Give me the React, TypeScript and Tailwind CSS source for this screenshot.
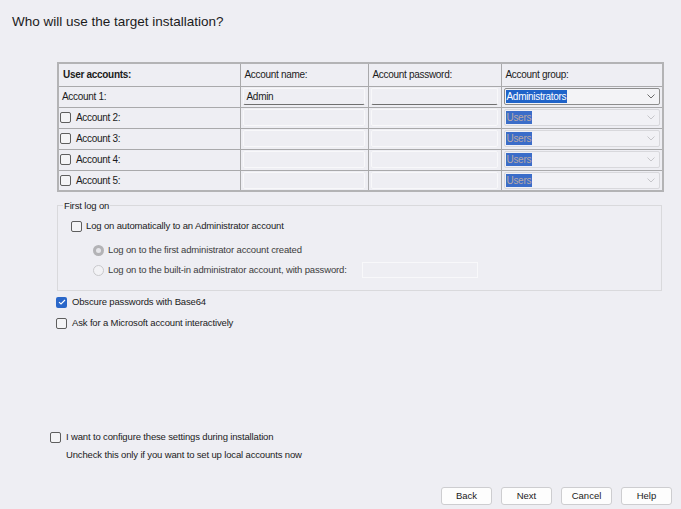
import React from "react";

const bg = "bg-[#eeeef3]";

function CheckBox({ checked }: { checked?: boolean }) {
  if (checked) {
    return (
      <span className="flex h-[11px] w-[11px] shrink-0 items-center justify-center rounded-[2px] bg-[#2a67c9]">
        <svg width="8" height="6" viewBox="0 0 8 6">
          <path d="M1 3.2 L3 5 L7 1" fill="none" stroke="white" strokeWidth="1.1" />
        </svg>
      </span>
    );
  }
  return <span className="h-[11px] w-[11px] shrink-0 rounded-[2px] border border-[#5e5e5e] bg-[#f4f4f6]" />;
}

function Radio({ checked }: { checked?: boolean }) {
  if (checked) {
    return (
      <span className="flex h-[11px] w-[11px] shrink-0 items-center justify-center rounded-full bg-[#b3b3b6]">
        <span className="h-[5px] w-[5px] rounded-full bg-[#e6e6ea]" />
      </span>
    );
  }
  return <span className="h-[11px] w-[11px] shrink-0 rounded-full border border-[#c9c9cc] bg-[#f2f2f5]" />;
}

function TextBox({ value, active }: { value?: string; active?: boolean }) {
  return (
    <div
      className={`flex h-[17px] items-center rounded-[2px] border px-[3px] ${
        active ? "border-[#f8f8fa] border-b-[#6f6f6f]" : "border-[#f8f8fa]"
      }`}
    >
      {value}
    </div>
  );
}

function Chevron({ color }: { color: string }) {
  return (
    <svg width="8" height="5" viewBox="0 0 8 5">
      <path d="M0.5 0.5 L4 4 L7.5 0.5" fill="none" stroke={color} strokeWidth="1" />
    </svg>
  );
}

function GroupSelect({ value, enabled }: { value: string; enabled?: boolean }) {
  return (
    <div
      className={`flex h-[17px] items-center rounded-[2px] border pl-[1px] pr-[4px] ${
        enabled ? "border-[#8d8d8d] bg-[#f3f3f6]" : "border-[#d8d8dc] bg-[#f1f1f5]"
      }`}
    >
      <span
        className={`px-[1px] leading-[13px] ${
          enabled ? "bg-[#1f63c9] text-white" : "bg-[#3b6dc9] text-[#b9a8a6]"
        }`}
      >
        {value}
      </span>
      <span className="flex-1" />
      <Chevron color={enabled ? "#6a6a6a" : "#c6c6ca"} />
    </div>
  );
}

const cell = "border border-[#a9a9ab] p-0 align-middle";
const small = "text-[9.5px] tracking-[-0.15px]";

export default function App() {
  const rows = [2, 3, 4, 5];

  return (
    <div
      className={`flex h-[509px] w-[681px] flex-col overflow-hidden ${bg} font-['Liberation_Sans',Arial,sans-serif] text-[#1b1b1b]`}
    >
      {/* Title */}
      <div className="h-[44px] pl-[12px] pt-[12px] text-[13.5px] leading-[20px]">
        Who will use the target installation?
      </div>

      {/* Accounts table */}
      <table className="ml-[57px] mt-[18px] w-[605px] table-fixed border-collapse border-2 border-[#b3b3b5] text-[10px] tracking-[-0.3px]">
        <colgroup>
          <col className="w-[182px]" />
          <col className="w-[128px]" />
          <col className="w-[133px]" />
          <col className="w-[162px]" />
        </colgroup>
        <tbody>
          <tr className="h-[23px]">
            <td className={`${cell} pl-[4px] font-bold`}>User accounts:</td>
            <td className={`${cell} pl-[4px]`}>Account name:</td>
            <td className={`${cell} pl-[4px]`}>Account password:</td>
            <td className={`${cell} pl-[4px]`}>Account group:</td>
          </tr>
          <tr className="h-[21px]">
            <td className={`${cell} pl-[3px]`}>Account 1:</td>
            <td className={`${cell} pl-[2px] pr-[3px]`}>
              <TextBox value="Admin" active />
            </td>
            <td className={`${cell} pl-[2px] pr-[3px]`}>
              <TextBox active />
            </td>
            <td className={`${cell} px-[2px]`}>
              <GroupSelect value="Administrators" enabled />
            </td>
          </tr>
          {rows.map((n) => (
            <tr key={n} className="h-[21px]">
              <td className={`${cell} pl-[1px]`}>
                <div className="flex items-center gap-[5px]">
                  <CheckBox />
                  <span>Account {n}:</span>
                </div>
              </td>
              <td className={`${cell} pl-[2px] pr-[3px]`}>
                <TextBox />
              </td>
              <td className={`${cell} pl-[2px] pr-[3px]`}>
                <TextBox />
              </td>
              <td className={`${cell} px-[2px]`}>
                <GroupSelect value="Users" />
              </td>
            </tr>
          ))}
        </tbody>
      </table>

      {/* First log on group */}
      <div className={`relative ml-[57px] mt-[13px] h-[86px] w-[605px] border border-[#d9d9dc] ${small}`}>
        <span className={`absolute left-[5px] top-[-7px] ${bg} px-[1px] leading-[13px]`}>First log on</span>
        <div className="mt-[13px] flex h-[14px] items-center gap-[4px] pl-[13px]">
          <CheckBox />
          <span>Log on automatically to an Administrator account</span>
        </div>
        <div className="mt-[10px] flex h-[14px] items-center gap-[4px] pl-[35px] text-[#3c3c3c]">
          <Radio checked />
          <span>Log on to the first administrator account created</span>
        </div>
        <div className="mt-[6px] flex h-[14px] items-center gap-[4px] pl-[35px] text-[#3c3c3c]">
          <Radio />
          <span>Log on to the built-in administrator account, with password:</span>
          <span className="ml-[11px] h-[16px] w-[116px] border border-[#f8f8fa]" />
        </div>
      </div>

      <div className={`mt-[4px] flex h-[14px] items-center gap-[5px] pl-[56px] ${small}`}>
        <CheckBox checked />
        <span>Obscure passwords with Base64</span>
      </div>
      <div className={`mt-[7px] flex h-[14px] items-center gap-[5px] pl-[56px] ${small}`}>
        <CheckBox />
        <span>Ask for a Microsoft account interactively</span>
      </div>

      <div className="flex-1" />

      {/* Bottom options */}
      <div className={`flex h-[14px] items-center gap-[5px] pl-[50px] ${small}`}>
        <CheckBox />
        <span>I want to configure these settings during installation</span>
      </div>
      <div className={`mt-[4px] flex h-[14px] items-center pl-[66px] ${small}`}>
        Uncheck this only if you want to set up local accounts now
      </div>

      {/* Buttons */}
      <div className="mb-[4px] mt-[25px] flex justify-end gap-[9px] pr-[9px] text-[9.5px]">
        {["Back", "Next", "Cancel", "Help"].map((b) => (
          <button
            key={b}
            className="flex h-[18px] w-[51px] items-center justify-center rounded-[3px] border border-[#cdcdd0] bg-[#fdfdfd]"
          >
            {b}
          </button>
        ))}
      </div>
    </div>
  );
}
